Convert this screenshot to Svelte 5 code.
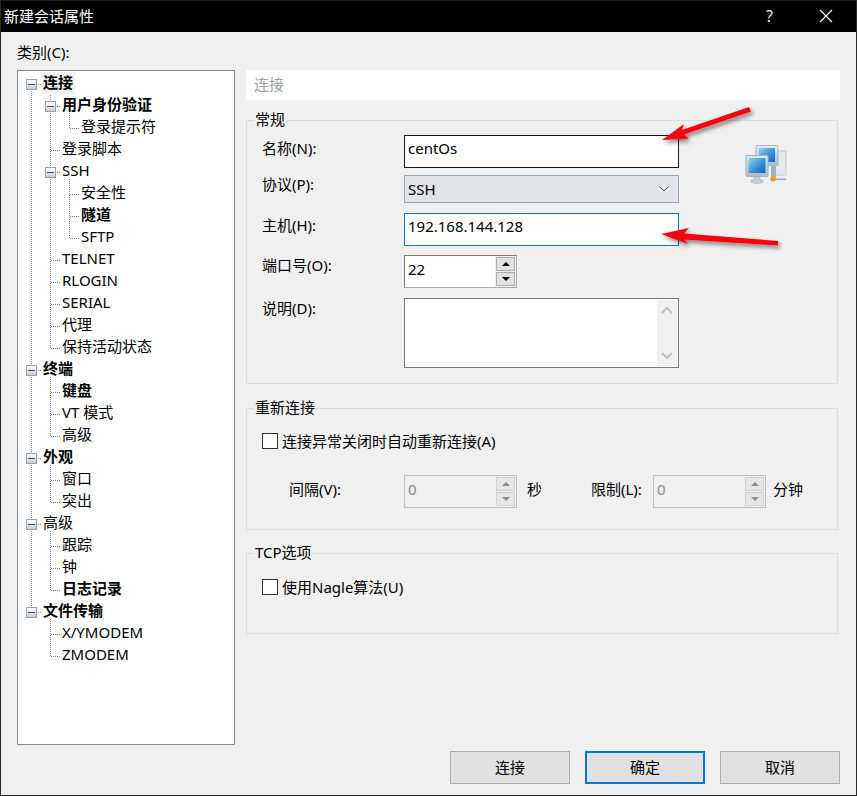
<script>
	const rows = [
		{ label: '连接', level: 0, bold: true, open: true, selected: true },
		{ label: '用户身份验证', level: 1, bold: true, open: true },
		{ label: '登录提示符', level: 2 },
		{ label: '登录脚本', level: 1 },
		{ label: 'SSH', level: 1, open: true },
		{ label: '安全性', level: 2 },
		{ label: '隧道', level: 2, bold: true },
		{ label: 'SFTP', level: 2 },
		{ label: 'TELNET', level: 1 },
		{ label: 'RLOGIN', level: 1 },
		{ label: 'SERIAL', level: 1 },
		{ label: '代理', level: 1 },
		{ label: '保持活动状态', level: 1 },
		{ label: '终端', level: 0, bold: true, open: true },
		{ label: '键盘', level: 1, bold: true },
		{ label: 'VT 模式', level: 1 },
		{ label: '高级', level: 1 },
		{ label: '外观', level: 0, bold: true, open: true },
		{ label: '窗口', level: 1 },
		{ label: '突出', level: 1 },
		{ label: '高级', level: 0, open: true },
		{ label: '跟踪', level: 1 },
		{ label: '钟', level: 1 },
		{ label: '日志记录', level: 1, bold: true },
		{ label: '文件传输', level: 0, bold: true, open: true },
		{ label: 'X/YMODEM', level: 1 },
		{ label: 'ZMODEM', level: 1 }
	];

	const rowH = 22;
	const lineX = [13.5, 32.5, 51.5];
	const midY = (i) => 13.5 + i * rowH;

	// dotted connector lines, worked out from the rows
	function buildLines() {
		const out = [];
		let lastRoot = 0;
		rows.forEach((r, i) => {
			if (r.level === 0) {
				if (i > 0) out.push({ x1: lineX[0], y1: midY(lastRoot) + 6, x2: lineX[0], y2: midY(i) - 6 });
				lastRoot = i;
				out.push({ x1: lineX[0] + 6, y1: midY(i), x2: lineX[0] + 10, y2: midY(i) });
				return;
			}
			// walk back to the parent row
			let p = i - 1;
			while (rows[p].level >= r.level) p--;
			// last child of this parent?
			let next = i + 1;
			while (next < rows.length && rows[next].level > r.level) next++;
			const isLast = next >= rows.length || rows[next].level < r.level;
			const x = lineX[r.level];
			if (isLast) out.push({ x1: x, y1: midY(p) + 6, x2: x, y2: midY(i) });
			out.push({ x1: x + (r.open ? 6 : 0), y1: midY(i), x2: x + 10, y2: midY(i) });
		});
		return out;
	}
	const lines = buildLines();
</script>

<div class="window">
	<header class="titlebar">
		<span class="title">新建会话属性</span>
		<span class="help">?</span>
		<svg class="close" width="14" height="14" viewBox="0 0 14 14">
			<path d="M1 1 L13 13 M13 1 L1 13" stroke="#fff" stroke-width="1.1" fill="none" />
		</svg>
	</header>

	<div class="client">
		<div class="category">类别(C):</div>

		<div class="panes">
			<nav class="tree">
				<svg class="tree-lines" width="216" height="673">
					{#each lines as l}
						<line x1={l.x1} y1={l.y1} x2={l.x2} y2={l.y2} />
					{/each}
				</svg>
				{#each rows as r}
					<div class="row l{r.level}" class:has-toggle={r.open}>
						{#if r.open}
							<span class="toggle"><i></i></span>
						{/if}
						<span class="label" class:bold={r.bold} class:selected={r.selected}>{r.label}</span>
					</div>
				{/each}
			</nav>

			<main class="content">
				<div class="heading">连接</div>

				<fieldset class="group general">
					<legend>常规</legend>
					<div class="form">
						<label class="off3" for="f-name">名称(N):</label>
						<div id="f-name" class="field hover">centOs</div>
						<div class="net-icon">
							<svg width="44" height="42" viewBox="0 0 44 42">
								<defs>
									<linearGradient id="scr" x1="0" y1="0" x2="1" y2="1">
										<stop offset="0" stop-color="#8fd0f2" />
										<stop offset="0.6" stop-color="#2f8fd8" />
										<stop offset="1" stop-color="#1c62b4" />
									</linearGradient>
									<linearGradient id="frame" x1="0" y1="0" x2="0" y2="1">
										<stop offset="0" stop-color="#e4edf3" />
										<stop offset="1" stop-color="#a9bcc9" />
									</linearGradient>
								</defs>
								<rect x="30" y="6" width="11" height="24" fill="#e3e8ec" stroke="#c3ccd3" />
								<rect x="11" y="0.5" width="22" height="20" rx="1" fill="url(#frame)" stroke="#a6b8c5" />
								<rect x="14" y="3" width="16" height="14" fill="url(#scr)" />
								<rect x="26" y="21" width="5" height="12" fill="#9fb0bc" />
								<rect x="25" y="33.5" width="16" height="1.6" fill="#9db0bd" />
								<rect x="1" y="10.5" width="22" height="21" rx="1" fill="url(#frame)" stroke="#9fb3c1" />
								<rect x="3.5" y="13" width="17" height="15" fill="url(#scr)" />
								<path d="M9 32 h6 v3 h3 v2.5 q-6 2 -12 0 v-2.5 h3z" fill="#c5d2db" stroke="#9db0bd" stroke-width="0.6" />
								<circle cx="28" cy="34" r="2.6" fill="#f39a0e" />
							</svg>
						</div>

						<label class="offn1" for="f-proto">协议(P):</label>
						<div id="f-proto" class="combo">
							<span>SSH</span>
							<svg width="10" height="6" viewBox="0 0 10 6"><path d="M0.5 0.5 L5 5 L9.5 0.5" fill="none" stroke="#555" stroke-width="1" /></svg>
						</div>

						<label class="off2" for="f-host">主机(H):</label>
						<div id="f-host" class="field focus">192.168.144.128</div>

						<label for="f-port">端口号(O):</label>
						<div id="f-port" class="spin">
							<div class="spin-value">22</div>
							<div class="spin-btns">
								<span class="spin-btn"><b class="up"></b></span>
								<span class="spin-btn"><b class="down"></b></span>
							</div>
						</div>

						<label for="f-desc">说明(D):</label>
						<div id="f-desc" class="memo">
							<div class="scrollbar">
								<svg width="14" height="9" viewBox="0 0 14 9"><path d="M2 7 L7 2 L12 7" fill="none" stroke="#c2c2c2" stroke-width="2" /></svg>
								<svg width="14" height="9" viewBox="0 0 14 9"><path d="M2 2 L7 7 L12 2" fill="none" stroke="#c2c2c2" stroke-width="2" /></svg>
							</div>
						</div>
					</div>
				</fieldset>

				<fieldset class="group reconnect">
					<legend>重新连接</legend>
					<div class="check">
						<span class="box"></span>
						<span>连接异常关闭时自动重新连接(A)</span>
					</div>
					<div class="limits">
						<span class="w-interval">间隔(V):</span>
						<div class="spin off">
							<div class="spin-value">0</div>
							<div class="spin-btns">
								<span class="spin-btn"><b class="up"></b></span>
								<span class="spin-btn"><b class="down"></b></span>
							</div>
						</div>
						<span class="w-sec">秒</span>
						<span class="w-limit">限制(L):</span>
						<div class="spin off">
							<div class="spin-value">0</div>
							<div class="spin-btns">
								<span class="spin-btn"><b class="up"></b></span>
								<span class="spin-btn"><b class="down"></b></span>
							</div>
						</div>
						<span class="w-min">分钟</span>
					</div>
				</fieldset>

				<fieldset class="group tcp">
					<legend>TCP选项</legend>
					<div class="check">
						<span class="box"></span>
						<span>使用Nagle算法(U)</span>
					</div>
				</fieldset>
			</main>
		</div>

		<footer class="buttons">
			<button type="button">连接</button>
			<button type="button" class="default">确定</button>
			<button type="button">取消</button>
		</footer>
	</div>

	<svg class="arrows" width="857" height="796" viewBox="0 0 857 796">
		<defs>
			<filter id="ashadow" x="-20%" y="-40%" width="140%" height="200%">
				<feDropShadow dx="2" dy="3" stdDeviation="2.2" flood-color="#000" flood-opacity="0.45" />
			</filter>
		</defs>
		<g fill="#fb0007" filter="url(#ashadow)">
			<path d="M662 140 L684 124 L682 130 L749 107 L751 111.5 L684 134.5 L689 138.5 Z" />
			<path d="M661 234 L689 228 L684 233.5 L778 241 L778 245.5 L684 239.5 L688 244 Z" />
		</g>
	</svg>
</div>

<style>
	:global(body) {
		margin: 0;
		background: #f0f0f0;
	}

	.window {
		position: relative;
		box-sizing: border-box;
		width: 857px;
		height: 796px;
		border: 1px solid #2a2a2a;
		border-top: 0;
		background: #f0f0f0;
		color: #000;
		font: 15px/20px "Noto Sans", "Noto Sans CJK SC", sans-serif;
		display: flex;
		flex-direction: column;
		overflow: hidden;
	}

	.titlebar {
		height: 32px;
		flex-shrink: 0;
		background: #000;
		color: #fff;
		display: flex;
		align-items: center;
		padding: 0 0 1px 3px;
		border-top: 1px solid #1c1c1c;
		box-sizing: border-box;
	}

	.title {
		flex: 1;
	}

	.help {
		margin-right: 46px;
		font-size: 16px;
		color: #e8e8e8;
	}

	.close {
		margin-right: 23px;
	}

	.client {
		flex: 1;
		padding: 10px 16px 0;
		display: flex;
		flex-direction: column;
		min-height: 0;
	}

	.category {
		height: 28px;
	}

	.panes {
		display: flex;
		gap: 11px;
		height: 675px;
	}

	.tree {
		position: relative;
		box-sizing: border-box;
		width: 218px;
		background: #fff;
		border: 1px solid #828790;
		padding-top: 1px;
		flex-shrink: 0;
	}

	.tree-lines {
		position: absolute;
		left: 0;
		top: 0;
	}

	.tree-lines line {
		stroke: #7f7f7f;
		stroke-width: 1;
		stroke-dasharray: 1 1;
		shape-rendering: crispEdges;
	}

	.row {
		position: relative;
		height: 22px;
		display: flex;
		white-space: nowrap;
		line-height: 20px;
	}

	.row.l0 {
		padding-left: 25px;
	}
	.row.l0.has-toggle {
		padding-left: 8px;
	}
	.row.l1 {
		padding-left: 44px;
	}
	.row.l1.has-toggle {
		padding-left: 27px;
	}
	.row.l2 {
		padding-left: 63px;
	}

	.toggle {
		box-sizing: border-box;
		width: 11px;
		height: 11px;
		margin: 7px 6px 0 0;
		border: 1px solid #98a0a8;
		background: linear-gradient(#fff, #ccc);
		display: flex;
		align-items: center;
		justify-content: center;
	}

	.toggle i {
		display: block;
		width: 7px;
		height: 1px;
		background: #3b4b8c;
	}

	.label {
		padding: 0 2px;
		margin-left: -2px;
	}

	.label.bold {
		font-weight: 700;
	}

	.label.selected {
		background: #f0f0f0;
	}

	.content {
		width: 594px;
		flex-shrink: 0;
	}

	.heading {
		height: 30px;
		line-height: 28px;
		background: #fff;
		color: #a0a0a0;
		padding-left: 8px;
		margin-bottom: 10px;
	}

	.group {
		box-sizing: border-box;
		width: 592px;
		margin: 0;
		padding: 0;
		border: 1px solid #dcdcdc;
		min-width: 0;
	}

	.group legend {
		margin-left: 7px;
		padding: 0 1px 2px;
		line-height: 18px;
	}

	.general {
		height: 274px;
		padding-top: 5px;
	}

	.reconnect {
		height: 132px;
		margin-top: 14px;
		padding-top: 13px;
	}

	.tcp {
		height: 91px;
		margin-top: 13px;
		padding-top: 14px;
	}

	.form {
		margin-left: 15px;
		display: grid;
		grid-template-columns: 142px 275px auto;
		grid-template-rows: 40px 38px 42px 43px 70px;
		align-items: start;
	}

	.form label {
		grid-column: 1;
	}

	.form label.off3 {
		margin-top: 3px;
	}
	.form label.off2 {
		margin-top: 2px;
	}
	.form label.offn1 {
		margin-top: -1px;
	}

	.field {
		box-sizing: border-box;
		height: 33px;
		grid-column: 2;
		background: #fff;
		border: 1px solid #7a7a7a;
		padding: 0 3px;
		line-height: 24px;
	}

	.field.hover {
		border-color: #171717;
	}

	.field.focus {
		border-color: #0078d7;
	}

	.net-icon {
		grid-column: 3;
		grid-row: 1 / span 2;
		margin: 10px 0 0 66px;
	}

	.combo {
		box-sizing: border-box;
		height: 28px;
		grid-column: 2;
		background: #e1e3e6;
		border: 1px solid #93a7b8;
		padding: 0 4px 0 3px;
		display: flex;
		align-items: center;
		justify-content: space-between;
	}

	.combo svg {
		margin-right: 5px;
	}

	.spin {
		box-sizing: border-box;
		width: 113px;
		height: 33px;
		grid-column: 2;
		display: flex;
		background: #fff;
		border: 1px solid #7a7a7a;
		border-right-color: #ababab;
		border-bottom-color: #ababab;
	}

	.spin-value {
		flex: 1;
		padding: 1px 3px;
		line-height: 24px;
	}

	.spin-btns {
		width: 21px;
		background: #f0f0f0;
		display: flex;
		flex-direction: column;
		gap: 1px;
		padding: 1px;
		box-sizing: border-box;
	}

	.spin-btn {
		flex: 1;
		background: #e1e1e1;
		border: 1px solid #adadad;
		display: flex;
		align-items: center;
		justify-content: center;
	}

	.spin-btn b {
		width: 0;
		height: 0;
		border-left: 4px solid transparent;
		border-right: 4px solid transparent;
	}

	.spin-btn .up {
		border-bottom: 4px solid #000;
	}

	.spin-btn .down {
		border-top: 4px solid #000;
	}

	.spin.off {
		background: #f0f0f0;
		border-color: #bfbfbf;
		color: #8a8a8a;
	}

	.spin.off .spin-btn {
		background: #e6e6e6;
		border-color: #d0d0d0;
	}

	.spin.off .up {
		border-bottom-color: #8c8c8c;
	}

	.spin.off .down {
		border-top-color: #8c8c8c;
	}

	.memo {
		box-sizing: border-box;
		height: 70px;
		grid-column: 2;
		background: #fff;
		border: 1px solid #7a7a7a;
		display: flex;
		justify-content: flex-end;
		padding: 1px;
	}

	.scrollbar {
		width: 20px;
		background: #f0f0f0;
		display: flex;
		flex-direction: column;
		justify-content: space-between;
		align-items: center;
		padding: 6px 0;
		box-sizing: border-box;
	}

	.scrollbar svg {
		display: block;
	}

	.check {
		margin-left: 15px;
		display: flex;
		align-items: center;
		gap: 4px;
		height: 20px;
	}

	.box {
		box-sizing: border-box;
		width: 16px;
		height: 16px;
		background: #fff;
		border: 1px solid #333;
	}

	.limits {
		display: flex;
		align-items: center;
		margin: 24px 0 0 42px;
	}

	.limits > span {
		padding-bottom: 6px;
	}

	.w-interval {
		width: 115px;
	}
	.w-sec {
		width: 64px;
		margin-left: 10px;
	}
	.w-limit {
		width: 62px;
	}
	.w-min {
		margin-left: 7px;
	}

	.buttons {
		display: flex;
		justify-content: flex-end;
		gap: 15px;
		margin-top: 6px;
	}

	.buttons button {
		box-sizing: border-box;
		width: 120px;
		height: 33px;
		background: #e1e1e1;
		border: 1px solid #adadad;
		font: inherit;
		color: #000;
		padding: 0 0 2px;
	}

	.buttons button.default {
		border: 2px solid #0078d7;
	}

	.arrows {
		position: absolute;
		left: -1px;
		top: 0;
		pointer-events: none;
	}
</style>
